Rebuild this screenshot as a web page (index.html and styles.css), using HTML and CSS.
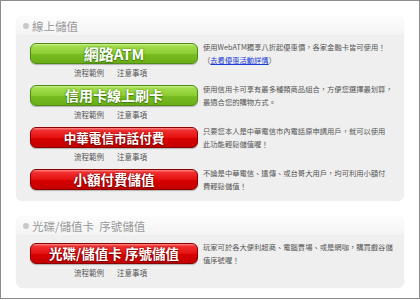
FILE: index.html
```html
<!DOCTYPE html>
<html lang="zh-Hant">
<head>
  <meta charset="UTF-8">
  <title>儲值方式</title>
  <link rel="stylesheet" href="styles.css">
</head>
<body>
  <div class="page">

    <div class="panel">
      <div class="panel-head"><span class="dot"></span>線上儲值</div>

      <div class="row">
        <div class="left">
          <a class="btn btn-green btn-lg" href="#">網路ATM</a>
          <div class="links"><a href="#">流程範例</a><a href="#">注意事項</a></div>
        </div>
        <p class="desc">使用WebATM獨享八折起優惠價，各家金融卡皆可使用！<br>（<a href="#">去看優惠活動詳情</a>）</p>
      </div>

      <div class="row">
        <div class="left">
          <a class="btn btn-green btn-md" href="#">信用卡線上刷卡</a>
          <div class="links"><a href="#">流程範例</a><a href="#">注意事項</a></div>
        </div>
        <p class="desc">使用信用卡可享有最多種類商品組合，方便您選擇最划算，<br>最適合您的購物方式。</p>
      </div>

      <div class="row">
        <div class="left">
          <a class="btn btn-red btn-sm" href="#">中華電信市話付費</a>
          <div class="links"><a href="#">流程範例</a><a href="#">注意事項</a></div>
        </div>
        <p class="desc">只要您本人是中華電信市內電話原申請用戶，就可以使用<br>此功能輕鬆儲值喔！</p>
      </div>

      <div class="row">
        <div class="left">
          <a class="btn btn-red" href="#">小額付費儲值</a>
        </div>
        <p class="desc">不論是中華電信、遠傳、或台哥大用戶，均可利用小額付<br>費輕鬆儲值！</p>
      </div>
    </div>

    <div class="panel panel-last">
      <div class="panel-head"><span class="dot"></span>光碟/儲值卡&nbsp; 序號儲值</div>

      <div class="row">
        <div class="left">
          <a class="btn btn-red" href="#">光碟/儲值卡 序號儲值</a>
          <div class="links"><a href="#">流程範例</a><a href="#">注意事項</a></div>
        </div>
        <p class="desc">玩家可於各大便利超商、電腦賣場、或是網咖，購買戲谷儲<br>值序號喔！</p>
      </div>
    </div>

  </div>
</body>
</html>
```

FILE: styles.css
```css
body {
  margin: 0;
  background: #fff;
  font-family: "Noto Sans CJK TC", "Liberation Sans", sans-serif;
}
.page {
  width: 420px;
  height: 299px;
  box-sizing: border-box;
  border: 1px solid #8c8c8c;
  padding: 16px 0 0 15px;
}
.panel {
  width: 388px;
  background: #efefef;
  border-radius: 7px;
  box-shadow: 0 0 1px #dcdcdc;
  padding-bottom: 8px;
  margin-bottom: 16px;
}
.panel-last {
  padding-bottom: 3px;
}
.panel-head {
  height: 18px;
  line-height: 18px;
  background: linear-gradient(#fcfcfc, #f4f4f4);
  border-radius: 7px 7px 4px 4px;
  color: #999;
  font-size: 11.5px;
  padding-left: 7px;
  display: flex;
  align-items: center;
  margin-bottom: 8px;
}
.dot {
  width: 6px;
  height: 6px;
  border-radius: 50%;
  background: #c8c8c8;
  margin-right: 3px;
}
.row {
  display: flex;
  align-items: flex-start;
}
.left {
  width: 168px;
  margin-left: 14px;
  margin-right: 5px;
}
.btn {
  display: block;
  height: 21px;
  box-sizing: border-box;
  border-radius: 6px;
  color: #fff;
  font-weight: bold;
  font-size: 13.5px;
  line-height: 19px;
  text-align: center;
  text-decoration: none;
  box-shadow: 0 1px 1px rgba(0, 0, 0, 0.25);
}
.btn-lg { font-size: 15px; }
.btn-md { font-size: 14px; }
.btn-sm { font-size: 12.6px; }
.btn-green {
  border: 1px solid #4f8d16;
  background: linear-gradient(#cdf28f 0%, #a2dc4c 12%, #8ccd32 50%, #78bd22 52%, #6aae18 100%);
  text-shadow: 0 0 2px #3e7a0c, 0 1px 1px #3e7a0c;
}
.btn-red {
  border: 1px solid #8a0000;
  background: linear-gradient(#ff8a8a 0%, #f03030 12%, #e61010 50%, #d80000 52%, #c40000 100%);
  text-shadow: 0 0 2px #7a0000, 0 1px 1px #7a0000;
}
.links {
  height: 21px;
  line-height: 18px;
  font-size: 7.5px;
  padding-left: 44px;
  display: flex;
  gap: 13px;
}
.links a {
  color: #555;
  text-decoration: none;
}
.desc {
  margin: -2px 0 0;
  white-space: nowrap;
  font-size: 7.3px;
  line-height: 13px;
  color: #555;
}
.desc a {
  color: #1a3bd6;
}
```
